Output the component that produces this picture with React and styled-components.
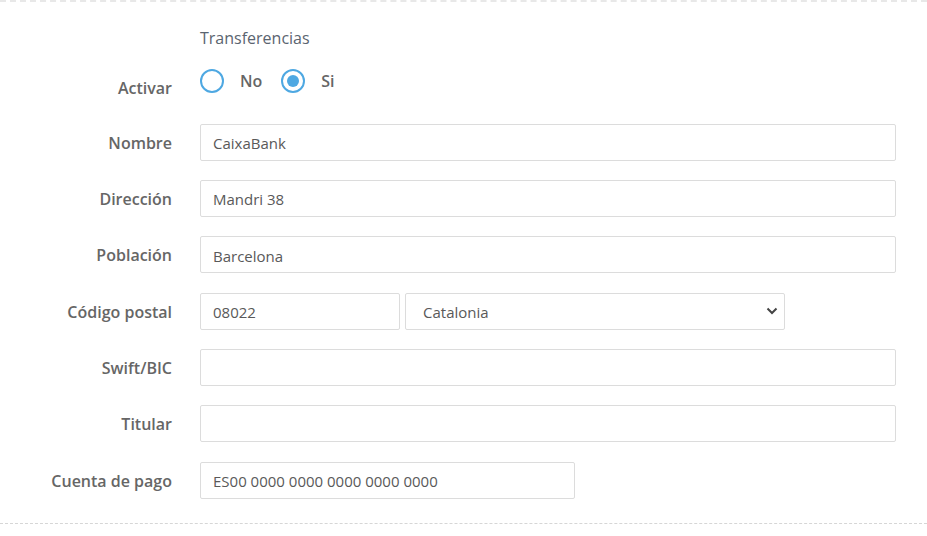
import React from "react";
import styled, { createGlobalStyle } from "styled-components";

const Global = createGlobalStyle`
  html, body { margin: 0; padding: 0; background: #fff; }
  body { font-family: "Open Sans", "Liberation Sans", sans-serif; }
  * { box-sizing: border-box; }
`;

const Panel = styled.div`
  width: 927px;
  height: 536px;
  border-top: 2px dashed #e8e8e8;
  padding-top: 26px;
`;

const Form = styled.div`
  display: flex;
  flex-direction: column;
  gap: 19.33px;
  padding-bottom: 24px;
  border-bottom: 1px dashed #d6d6d6;
`;

const Heading = styled.div`
  margin-left: 200px;
  font-size: 16px;
  line-height: 21px;
  color: #5a6470;
`;

const Row = styled.div`
  display: grid;
  grid-template-columns: 172px 1fr;
  column-gap: 28px;
  padding-right: 31px;
  align-items: ${(p) => (p.$top ? "start" : "center")};
  min-height: ${(p) => (p.$top ? "36px" : "37px")};
`;

const Label = styled.label`
  text-align: right;
  font-size: 16px;
  font-weight: 600;
  color: #666;
  line-height: 21px;
  padding-top: ${(p) => (p.$pad ? "10px" : "2px")};
`;

const Input = styled.input`
  height: 37px;
  width: ${(p) => p.$w || "100%"};
  border: 1px solid #dcdcdc;
  border-radius: 2px;
  padding: 2px 12px 0;
  font-family: inherit;
  font-size: 15px;
  color: #595959;
  outline: none;
  background: #fff;
`;

const Pair = styled.div`
  display: flex;
  gap: 5px;
`;

const SelectWrap = styled.div`
  position: relative;
  width: 380px;
  height: 37px;
`;

const Select = styled.select`
  appearance: none;
  width: 100%;
  height: 37px;
  border: 1px solid #dcdcdc;
  border-radius: 2px;
  padding: 2px 17px 0;
  font-family: inherit;
  font-size: 15px;
  color: #595959;
  background: #fff;
  outline: none;
`;

const Chevron = styled.svg`
  position: absolute;
  right: 7px;
  top: 14px;
  pointer-events: none;
`;

const Radios = styled.div`
  display: flex;
  align-items: center;
  height: 24px;
  margin-top: 1px;
`;

const RadioOpt = styled.label`
  display: flex;
  align-items: center;
  margin-right: 19px;
  font-size: 16px;
  font-weight: 600;
  color: #666;
`;

const Circle = styled.span`
  width: 24px;
  height: 24px;
  border-radius: 50%;
  border: 2px solid #4ea8e2;
  display: inline-flex;
  align-items: center;
  justify-content: center;
  margin-right: 16px;
  &::after {
    content: "";
    width: 12px;
    height: 12px;
    border-radius: 50%;
    background: ${(p) => (p.$on ? "#4ea8e2" : "transparent")};
  }
`;

export default function App() {
  return (
    <>
      <Global />
      <Panel>
        <Form>
          <Heading>Transferencias</Heading>
          <Row $top>
            <Label $pad>Activar</Label>
            <Radios>
              <RadioOpt>
                <Circle />
                No
              </RadioOpt>
              <RadioOpt>
                <Circle $on />
                Si
              </RadioOpt>
            </Radios>
          </Row>
          <Row>
            <Label>Nombre</Label>
            <Input defaultValue="CaixaBank" />
          </Row>
          <Row>
            <Label>Dirección</Label>
            <Input defaultValue="Mandri 38" />
          </Row>
          <Row>
            <Label>Población</Label>
            <Input defaultValue="Barcelona" />
          </Row>
          <Row>
            <Label>Código postal</Label>
            <Pair>
              <Input $w="200px" defaultValue="08022" />
              <SelectWrap>
                <Select defaultValue="Catalonia">
                  <option>Catalonia</option>
                </Select>
                <Chevron width="12" height="8" viewBox="0 0 12 8">
                  <path d="M1.5 1.5 L6 6 L10.5 1.5" fill="none" stroke="#444" strokeWidth="2" />
                </Chevron>
              </SelectWrap>
            </Pair>
          </Row>
          <Row>
            <Label>Swift/BIC</Label>
            <Input />
          </Row>
          <Row>
            <Label>Titular</Label>
            <Input />
          </Row>
          <Row>
            <Label>Cuenta de pago</Label>
            <Input $w="375px" defaultValue="ES00 0000 0000 0000 0000 0000" />
          </Row>
        </Form>
      </Panel>
    </>
  );
}
